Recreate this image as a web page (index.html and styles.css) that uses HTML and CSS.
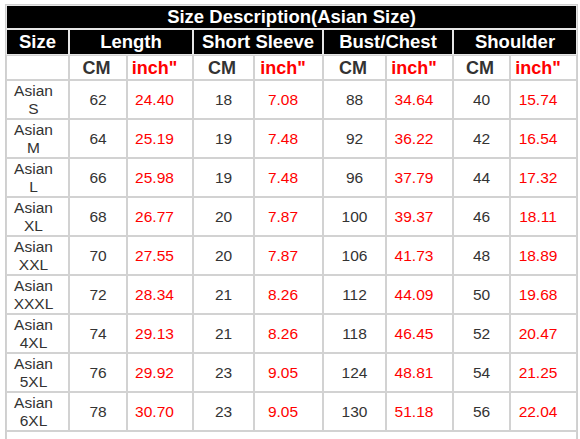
FILE: index.html
```html
<!DOCTYPE html>
<html>
<head>
<meta charset="utf-8">
<link rel="stylesheet" href="styles.css">
</head>
<body>
<table class="size-table">
  <colgroup>
    <col class="c-size"><col class="c1"><col class="c2"><col class="c3"><col class="c4"><col class="c5"><col class="c6"><col class="c7"><col class="c8">
  </colgroup>
  <tr class="row-title"><th colspan="9">Size Description(Asian Size)</th></tr>
  <tr class="row-head">
    <th>Size</th>
    <th colspan="2">Length</th>
    <th colspan="2">Short Sleeve</th>
    <th colspan="2">Bust/Chest</th>
    <th colspan="2">Shoulder</th>
  </tr>
  <tr class="row-unit">
    <td></td>
    <td class="cm">CM</td><td class="in">inch"</td>
    <td class="cm">CM</td><td class="in">inch"</td>
    <td class="cm">CM</td><td class="in">inch"</td>
    <td class="cm">CM</td><td class="in">inch"</td>
  </tr>
  <tr class="row-data"><td class="name">Asian<br>S</td><td>62</td><td class="red">24.40</td><td>18</td><td class="red">7.08</td><td>88</td><td class="red">34.64</td><td>40</td><td class="red">15.74</td></tr>
  <tr class="row-data"><td class="name">Asian<br>M</td><td>64</td><td class="red">25.19</td><td>19</td><td class="red">7.48</td><td>92</td><td class="red">36.22</td><td>42</td><td class="red">16.54</td></tr>
  <tr class="row-data"><td class="name">Asian<br>L</td><td>66</td><td class="red">25.98</td><td>19</td><td class="red">7.48</td><td>96</td><td class="red">37.79</td><td>44</td><td class="red">17.32</td></tr>
  <tr class="row-data"><td class="name">Asian<br>XL</td><td>68</td><td class="red">26.77</td><td>20</td><td class="red">7.87</td><td>100</td><td class="red">39.37</td><td>46</td><td class="red">18.11</td></tr>
  <tr class="row-data"><td class="name">Asian<br>XXL</td><td>70</td><td class="red">27.55</td><td>20</td><td class="red">7.87</td><td>106</td><td class="red">41.73</td><td>48</td><td class="red">18.89</td></tr>
  <tr class="row-data"><td class="name">Asian<br>XXXL</td><td>72</td><td class="red">28.34</td><td>21</td><td class="red">8.26</td><td>112</td><td class="red">44.09</td><td>50</td><td class="red">19.68</td></tr>
  <tr class="row-data"><td class="name">Asian<br>4XL</td><td>74</td><td class="red">29.13</td><td>21</td><td class="red">8.26</td><td>118</td><td class="red">46.45</td><td>52</td><td class="red">20.47</td></tr>
  <tr class="row-data"><td class="name">Asian<br>5XL</td><td>76</td><td class="red">29.92</td><td>23</td><td class="red">9.05</td><td>124</td><td class="red">48.81</td><td>54</td><td class="red">21.25</td></tr>
  <tr class="row-data"><td class="name">Asian<br>6XL</td><td>78</td><td class="red">30.70</td><td>23</td><td class="red">9.05</td><td>130</td><td class="red">51.18</td><td>56</td><td class="red">22.04</td></tr>
  <tr class="row-foot"><td colspan="9">&nbsp;</td></tr>
</table>
</body>
</html>
```
FILE: styles.css
```css
html, body {
  margin: 0;
  padding: 0;
  background: #ffffff;
}
body {
  padding: 4px 4px 0 5px;
  font-family: "Liberation Sans", Arial, sans-serif;
  overflow: hidden;
}
.size-table {
  table-layout: fixed;
  width: 571px;
  border-collapse: separate;
  border-spacing: 0;
  border: 1px solid #cfcfcf;
  color: #333333;
}
.c-size { width: 63px; }
.c1 { width: 58px; }
.c2 { width: 66px; }
.c3 { width: 61px; }
.c4 { width: 69px; }
.c5 { width: 63px; }
.c6 { width: 67px; }
.c7 { width: 57px; }
.c8 { width: 67px; }
.size-table th,
.size-table td {
  border: 1px solid #d2d2d2;
  padding: 0;
  text-align: center;
  vertical-align: middle;
}
.size-table th {
  background: #000000;
  color: #ffffff;
  font-weight: bold;
  font-size: 18.5px;
  line-height: 20px;
  border-color: #e6e6e6;
}
.row-title th {
  height: 22px;
}
.row-head th {
  height: 24px;
}
.row-unit td {
  height: 23px;
  font-weight: bold;
  font-size: 18px;
  line-height: 20px;
}
.row-unit .cm { color: #333333; padding-right: 3px; }
.row-unit .in { color: #ff0000; padding-right: 11px; }
.row-data td {
  height: 37px;
  font-size: 15.5px;
  line-height: 17.5px;
}
.row-data td.name { padding-right: 8px; }
.row-data td.red { color: #ff0000; padding-right: 11px; }
.row-foot td {
  height: 20px;
}
```
